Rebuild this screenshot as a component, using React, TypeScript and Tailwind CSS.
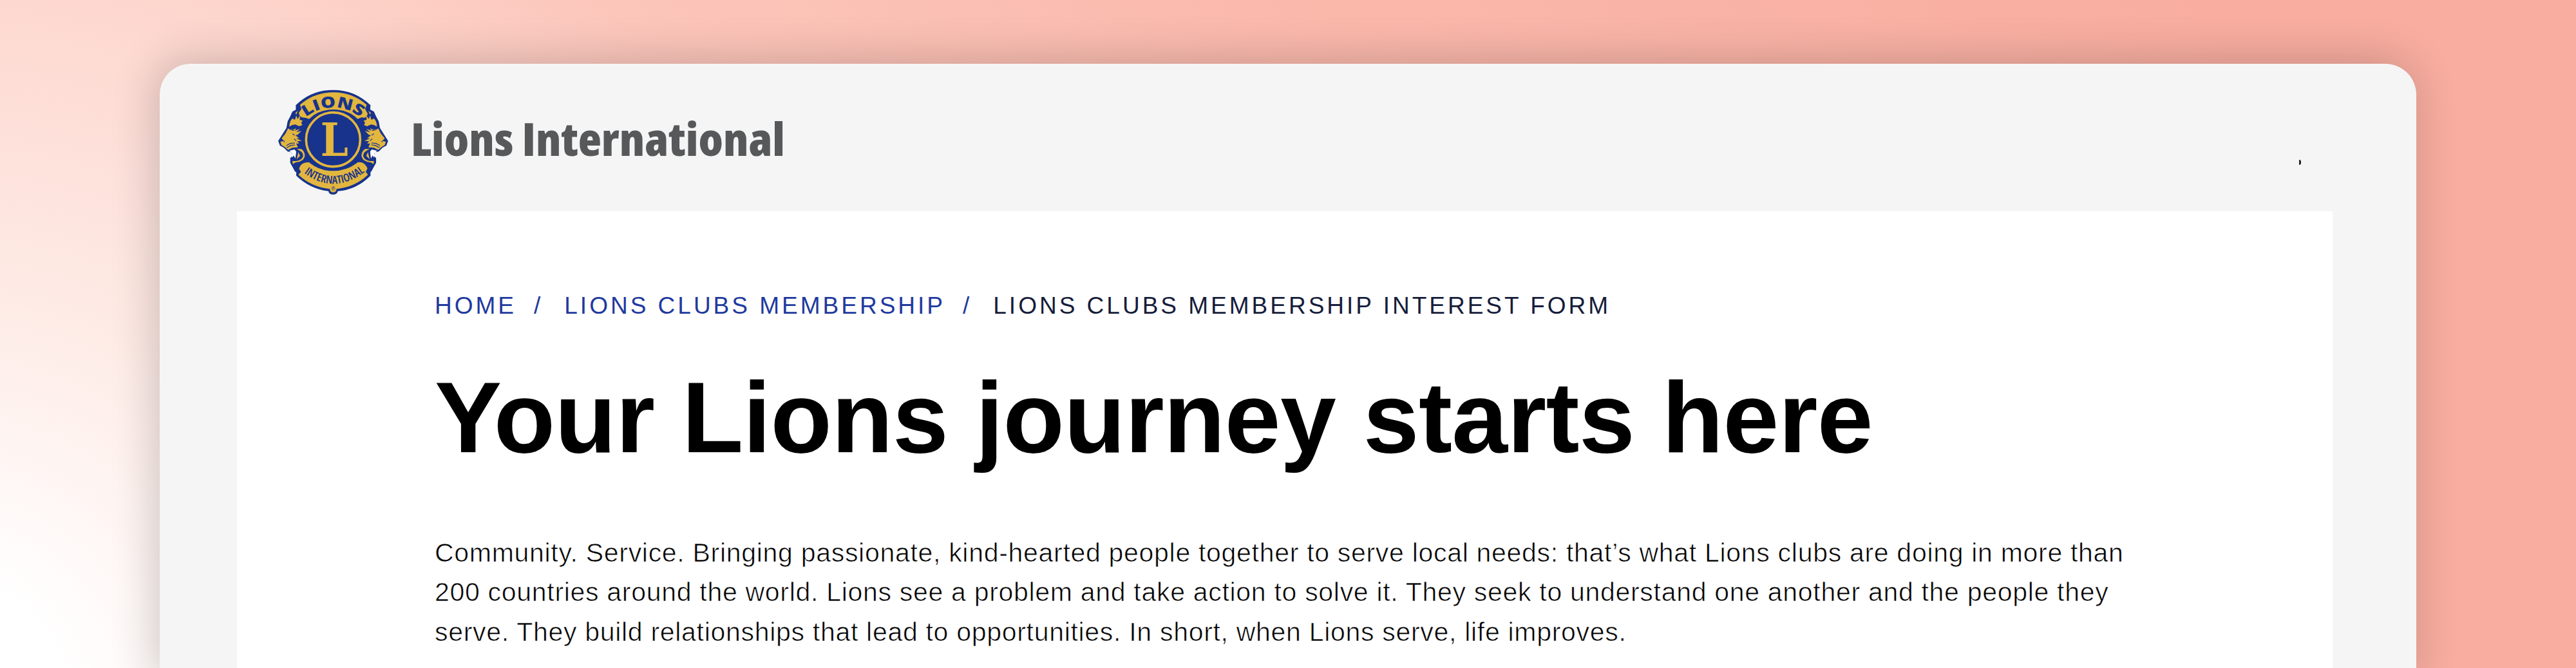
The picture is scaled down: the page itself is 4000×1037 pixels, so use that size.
import React from "react"

// Left lion head, mirrored for the right one
function LionHead() {
  return (
    <g>
      <path
        d="M200 130 L150 150 L132 160 L122 182 L110 205 L104 236 L84 268 L66 296 L74 318 L92 328 L110 346 L126 348 L134 366 L122 376 L122 398 L132 416 L145 440 L200 440 L200 130 Z"
        fill="#17338c"
      />
      <path d="M146 166 L158 156 L150 174 Z" fill="#e2b63f" />
      <path
        d="M118 230 Q118 206 132 192 L144 198 L150 178 L156 194 L168 178 L166 198 L180 202 L173 212 L179 222 L164 228 L146 220 L132 222 Z"
        fill="#e2b63f"
      />
      <path
        d="M112 238 L134 244 L150 238 L144 248 L168 240 L150 256 L174 250 L156 268 L146 270 L164 284 L150 284 L176 296 L154 298 L164 308 L150 308 L158 326 L132 328 L112 338 L96 324 L82 316 L76 300 L92 296 L82 284 L100 262 Z"
        fill="#e2b63f"
      />
      <path
        d="M114 236 Q128 250 142 246 M132 262 L142 270 M78 298 Q92 290 96 302 M104 318 L122 308 L144 306 M106 328 L126 317 L144 315 M140 286 L150 296"
        fill="none"
        stroke="#17338c"
        strokeWidth="3.5"
      />
      <path d="M118 342 L142 336 L150 346 L146 378 L138 364 L132 374 L130 354 Z" fill="#ffffff" />
      <path
        d="M152 334 L174 334 Q192 348 190 368 Q182 394 148 396 L134 404 L132 390 L150 390 Q178 386 182 366 Q182 350 166 342 Z"
        fill="#e2b63f"
      />
      <path d="M160 348 L168 366 L152 382 Z" fill="#e2b63f" />
    </g>
  )
}

function Emblem() {
  return (
    <svg className="mt-[21px] h-[200px] w-[220px] shrink-0" viewBox="0 0 660 600">
      <defs>
        <path id="arc-top" d="M182 198 A200 200 0 0 1 462 198" />
        <path id="arc-bottom" d="M178 440 Q322 552 470 440" />
      </defs>

      {/* Body */}
      <path
        d="M148 130 Q218 59 322 59 Q424 59 496 130 L494 152 L510 176 L505 400 L496 422 L496 458 Q430 524 344 530 Q340 546 322 546 Q302 546 300 530 Q214 520 150 458 L150 418 L165 400 L165 172 L148 152 Z"
        fill="#17338c"
      />

      {/* Heads */}
      <LionHead />
      <g transform="translate(644 0) scale(-1 1)">
        <LionHead />
      </g>

      {/* Banners */}
      <path
        d="M168 128 Q232 70 322 70 Q412 70 478 128 L471 148 L483 170 Q476 194 456 186 L436 194 Q392 150 322 150 Q252 150 210 194 L192 188 Q164 190 162 166 L174 148 Z"
        fill="#e2b63f"
      />
      <path
        d="M163 426 Q172 394 210 396 Q256 436 322 436 Q388 436 436 396 Q468 392 482 424 L474 440 L484 454 Q424 512 338 520 Q336 536 322 536 Q308 536 306 520 Q222 512 160 454 L172 440 Z"
        fill="#e2b63f"
      />

      {/* Ring */}
      <circle cx="322" cy="290" r="137" fill="#17338c" />
      <circle cx="322" cy="290" r="126" fill="#17338c" stroke="#e2b63f" strokeWidth="11" />

      <text
        transform="translate(263 366) scale(.87 1)"
        fill="#e2b63f"
        className="font-['DejaVu_Serif',serif] text-[211px] font-bold"
      >
        L
      </text>
      <text fill="#17338c" className="font-['Open_Sans',sans-serif] text-[72px] font-extrabold">
        <textPath href="#arc-top" startOffset="18" textLength="274" lengthAdjust="spacingAndGlyphs">LIONS</textPath>
      </text>
      <text fill="#17338c" className="font-['Open_Sans',sans-serif] text-[51px] font-semibold [font-stretch:75%]">
        <textPath href="#arc-bottom" startOffset="10" textLength="308" lengthAdjust="spacingAndGlyphs">INTERNATIONAL</textPath>
      </text>
      <text x="322" y="529" textAnchor="middle" fill="#17338c" className="font-['Liberation_Sans',sans-serif] text-[26px]">
        ®
      </text>
    </svg>
  )
}

function Wordmark() {
  return (
    <svg className="mt-[70px] h-[110px] w-[620px] shrink-0" viewBox="0 0 620 110">
      <text
        x="8"
        y="73"
        textLength="581"
        lengthAdjust="spacingAndGlyphs"
        fill="#56585a"
        className="font-['Open_Sans',sans-serif] text-[70.5px] font-extrabold [font-stretch:75%]"
      >
        Lions International
      </text>
    </svg>
  )
}

const crumbs = ["HOME", "LIONS CLUBS MEMBERSHIP"]

export default function App() {
  return (
    <div className="h-[1037px] w-[4000px] overflow-hidden bg-[radial-gradient(circle_at_-100px_1100px,#ffffff_200px,#feebe6_640px,#fdd8d0_1105px,#fcc6bb_1500px,#fab9ac_2300px,#f8ada0_3700px)] pt-[99px] pl-[248px] font-['Liberation_Sans',sans-serif]">
      <div className="h-[960px] w-[3504px] rounded-t-[48px] bg-[#f5f5f5] shadow-[-6px_-4px_70px_rgba(0,0,0,0.2)]">
        {/* Header */}
        <header className="flex h-[229px] items-start pr-[179px] pl-[162px]">
          <Emblem />
          <Wordmark />
          <span className="mt-[149px] ml-auto h-[8px] w-[3px] rounded-r-full bg-[#222222]" />
        </header>

        {/* Page */}
        <main className="ml-[120px] h-[740px] w-[3254px] bg-white pt-[127px] pl-[307px] whitespace-nowrap">
          <nav className="flex text-[37px] leading-[40px] tracking-[4px] text-[#1f3a9e]">
            {crumbs.map((c) => (
              <React.Fragment key={c}>
                <span>{c}</span>
                <span className="mr-[33px] ml-[27px]">/</span>
              </React.Fragment>
            ))}
            <span className="text-[#161d3a]">LIONS CLUBS MEMBERSHIP INTEREST FORM</span>
          </nav>
          <h1 className="mt-[73px] text-[156px] leading-[160px] font-bold tracking-[-0.6px] text-black">
            Your Lions journey starts here
          </h1>
          <p className="mt-[100px] text-[41px] leading-[61.3px] tracking-[0.7px] text-black [-webkit-text-stroke:0.7px_white]">
            Community. Service. Bringing passionate, kind-hearted people together to serve local needs: that’s what Lions clubs are doing in more than
            <br />
            200 countries around the world. Lions see a problem and take action to solve it. They seek to understand one another and the people they
            <br />
            serve. They build relationships that lead to opportunities. In short, when Lions serve, life improves.
          </p>
        </main>
      </div>
    </div>
  )
}
